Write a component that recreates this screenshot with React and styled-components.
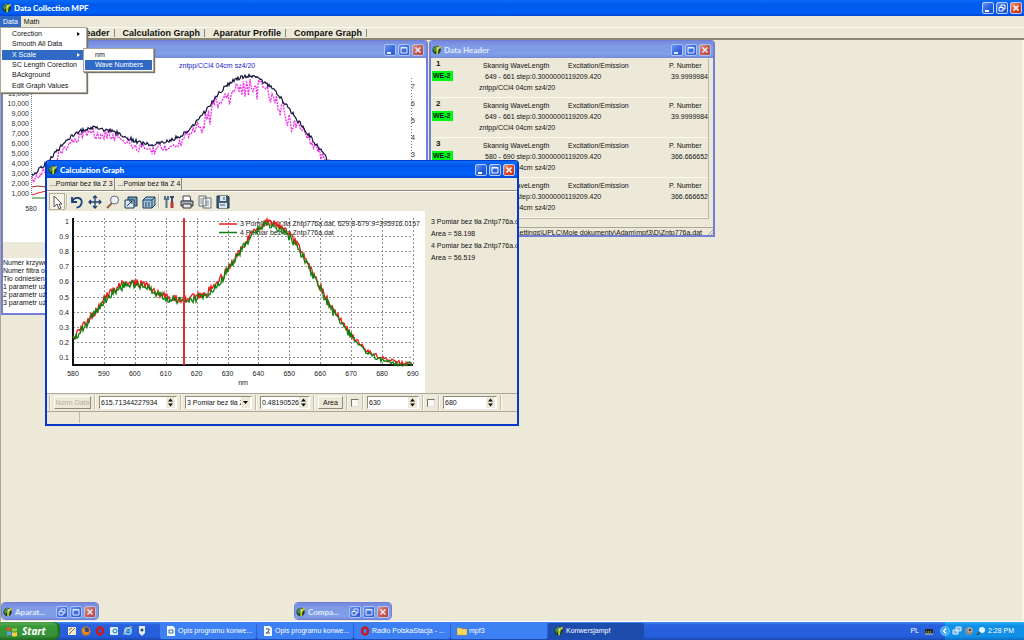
import React from "react";
import styled, { createGlobalStyle, css } from "styled-components";

const GlobalStyle = createGlobalStyle`
  * { box-sizing: border-box; }
  html, body, #root { height: 100%; }
  body {
    margin: 0;
    overflow: hidden;
    background: #ece9d8;
    color: #111;
    font: 7px/10px "Liberation Sans", Arial, sans-serif;
  }
  button, input, select { font: inherit; color: inherit; margin: 0; }
`;

const Screen = styled.div`
  display: flex;
  flex-direction: column;
  height: 100vh;
`;

const TitleBar = styled.header`
  display: flex;
  align-items: center;
  gap: 2px;
  height: ${({ $main }) => ($main ? 16 : 17)}px;
  flex: none;
  padding: 0 2px 0 ${({ $main }) => ($main ? 2 : 1)}px;
  color: #fff;
  background: linear-gradient(#0a6cf8, #0058ea 30%, #0060f8 80%, #0046d0);
  ${({ $inactive }) =>
    $inactive &&
    css`
      color: #dce6fa;
      background: linear-gradient(#7388dc, #809ae6 30%, #7f9ee8 80%, #7488d8);
    `}
`;

const Title = styled.h1`
  flex: 1;
  margin: 0;
  overflow: hidden;
  white-space: nowrap;
  font: 900 8px/12px Lato, "Noto Sans", sans-serif;
`;

const Captions = styled.div`
  display: flex;
  gap: 2px;
  opacity: ${({ $inactive }) => ($inactive ? 0.8 : 1)};
`;

const CaptionButton = styled.button`
  display: flex;
  width: 12px;
  height: 12px;
  padding: 0;
  border: 1px solid #b8ccf8;
  border-radius: 2px;
  background: ${({ $close }) =>
    $close
      ? "linear-gradient(135deg, #f09a80, #dc4a28 50%, #c03418)"
      : "linear-gradient(135deg, #6a96f4, #2c62e0 50%, #1c4cc8)"};
`;

const MenuBar = styled.nav`
  display: flex;
  flex: none;
  height: 11px;
`;

const MenuTitle = styled.button`
  height: 11px;
  padding: 0 3px;
  border: 0;
  color: ${({ $open }) => ($open ? "#fff" : "#111")};
  background: ${({ $open }) => ($open ? "#316ac5" : "transparent")};
`;

const TabRow = styled.nav`
  display: flex;
  flex: none;
  height: 13px;
  padding: 1px 0 1px 49px;
  border-top: 1px solid #fbfaf4;
  border-bottom: 2px solid #8b8877;
`;

const PageTab = styled.button`
  padding: 0 4px 0 8px;
  border: 0;
  border-right: 1px solid #8b8877;
  background: none;
  font-weight: bold;
  font-size: 9px;
  line-height: 9px;
`;

const Desktop = styled.main`
  position: relative;
  flex: 1;
  border-left: 1px solid #aaa693;
  border-right: 2px solid #f6f4ec;
  border-bottom: 1px solid #fff;
  overflow: hidden;
`;

const Window = styled.section`
  position: absolute;
  display: flex;
  flex-direction: column;
  left: ${({ $x }) => $x}px;
  top: ${({ $y }) => $y}px;
  width: ${({ $w }) => $w}px;
  height: ${({ $h }) => $h}px;
  border: 2px solid ${({ $inactive }) => ($inactive ? "#727fd4" : "#0838c8")};
  border-top-width: 1px;
  border-radius: 4px 4px 0 0;
  background: #ece9d8;
  overflow: hidden;
`;

const Minimized = styled(Window)`
  top: auto;
  bottom: 1px;
  height: 18px;
  border-width: 1px;
  border-radius: 4px;
`;

const Menu = styled.ul`
  position: absolute;
  z-index: 2;
  display: flex;
  flex-direction: column;
  left: ${({ $x }) => $x}px;
  top: ${({ $y }) => $y}px;
  width: ${({ $w }) => $w}px;
  height: ${({ $h }) => $h}px;
  margin: 0;
  padding: 1px;
  list-style: none;
  background: #fff;
  border: 1px solid #aca899;
  box-shadow: 1px 1px 1px #77736a;
`;

const MenuItem = styled.li`
  display: flex;
  flex: 1;
  align-items: center;
  justify-content: space-between;
  padding: 0 4px 0 10px;
  color: ${({ $on }) => ($on ? "#fff" : "#111")};
  background: ${({ $on }) => ($on ? "#316ac5" : "#fff")};
`;

const White = styled.div`
  background: #fff;
  svg { display: block; }
`;

const Parameters = styled.div`
  flex: 1;
  margin-top: 16px;
  padding-top: 1px;
  background: #fff;
  line-height: 8px;
  white-space: nowrap;
`;

const Records = styled.div`
  flex: 1;
  margin: 0 4px 8px 0;
  border-right: 1px solid #bdb9a8;
  border-bottom: 1px solid #bdb9a8;
`;

const Record = styled.article`
  display: grid;
  grid-template-columns: 46px 91px 1fr 45px;
  grid-template-rows: 11px 11px 11px;
  height: 40px;
  padding-top: 2px;
  border-bottom: 1px solid #fbfaf2;
  white-space: nowrap;
`;

const RecordNo = styled.b`
  padding-left: 5px;
  font-size: 8px;
  line-height: 8px;
`;

const Tag = styled.b`
  width: 21px;
  height: 10px;
  margin-left: 1px;
  padding-left: 1px;
  background: #00f818;
`;

const Cell = styled.span`
  padding: 1px 0 0 ${({ $indent }) => $indent || 0}px;
  grid-column: ${({ $col }) => $col || "auto"};
  text-align: ${({ $right }) => ($right ? "right" : "left")};
`;

const PathBar = styled.footer`
  display: flex;
  align-items: center;
  justify-content: flex-end;
  gap: 3px;
  height: 11px;
  border-top: 1px solid #aca899;
  white-space: nowrap;
`;

const DataTabs = styled.div`
  display: flex;
  height: 13px;
  border-bottom: 1px solid #8d8a7a;
`;

const DataTab = styled.button`
  padding: 0 1px 0 3px;
  border: 0;
  border-right: 1px solid #8d8a7a;
  background: none;
`;

const Rule = styled.i`
  width: 2px;
  height: 15px;
  border-left: 1px solid #c1bdab;
  border-right: 1px solid #fbfaf4;
`;

const Tools = styled.div`
  display: flex;
  align-items: center;
  height: 20px;
  padding-left: 2px;
  gap: 2px;
  border-top: 1px solid #fff;
  ${Rule} { margin: 0 -1px; }
`;

const Tool = styled.button`
  display: flex;
  align-items: center;
  justify-content: center;
  width: 16px;
  height: 17px;
  padding: 0;
  border: 1px solid ${({ $on }) => ($on ? "#b5b19f" : "transparent")};
  background: ${({ $on }) => ($on ? "#f5f3ea" : "none")};
`;

const GraphArea = styled.div`
  display: flex;
  height: 182px;
`;

const Results = styled.div`
  flex: 1;
  padding: 5px 0 0 6px;
  line-height: 12px;
  white-space: nowrap;
  overflow: hidden;
`;

const Controls = styled.form`
  display: flex;
  align-items: center;
  height: 19px;
  padding-left: 2px;
  gap: 3px;
  border-top: 1px solid #aca899;
  border-bottom: 1px solid #aca899;
`;

const PushButton = styled.button`
  width: ${({ $w }) => $w}px;
  height: 13px;
  padding: 0;
  border: 1px solid;
  border-color: #fff #8d8a7a #8d8a7a #fff;
  background: #ece9d8;
  white-space: nowrap;
  overflow: hidden;
  &:disabled { color: #b5b19f; }
`;

const Field = styled.label`
  display: flex;
  width: ${({ $w }) => $w}px;
  height: 13px;
  padding-right: 1px;
  align-items: center;
  border: 1px solid;
  border-color: #8d8a7a #fff #fff #8d8a7a;
  background: #fff;
  input, select {
    flex: 1;
    min-width: 0;
    width: 0;
    height: 10px;
    padding: 0 0 0 1px;
    border: 0;
    outline: 0;
    appearance: none;
    background: none;
  }
`;

const Spin = styled.span`
  display: flex;
  width: 9px;
  height: 11px;
  background: #ece9d8;
`;

const Check = styled.input`
  appearance: none;
  width: 8px;
  height: 8px;
  background: #f8f7f0;
  border: 1px solid;
  border-color: #77746a #ddd #ddd #77746a;
`;

const StatusBar = styled.footer`
  flex: 1;
  &::before {
    content: "";
    display: block;
    width: 32px;
    height: 11px;
    border-right: 1px solid #bdb9a8;
  }
`;

const TaskBar = styled.footer`
  display: flex;
  flex: none;
  height: 18px;
  color: #fff;
  background: linear-gradient(#3f8cf3, #2a62de 15%, #245edc 80%, #1c48b0);
`;

const Start = styled.button`
  display: flex;
  align-items: center;
  gap: 5px;
  width: 60px;
  padding: 0 0 0 6px;
  border: 0;
  border-radius: 0 6px 6px 0;
  background: linear-gradient(#5cb45a, #389838 25%, #37923a 75%, #246c24);
  box-shadow: inset -2px 0 2px #1c641c;
  color: #fff;
  font: italic bold 10px/14px "Open Sans", sans-serif;
`;

const QuickLaunch = styled.div`
  display: flex;
  align-items: center;
  gap: 4px;
  width: 100px;
  padding-left: 7px;
`;

const Task = styled.button`
  display: flex;
  align-items: center;
  gap: 2px;
  flex: 0 1 96px;
  min-width: 0;
  margin: 1px 1px 1px 0;
  padding: 0 5px 0 6px;
  border: 0;
  border-radius: 2px;
  color: #fff;
  white-space: nowrap;
  overflow: hidden;
  background: ${({ $on }) => ($on ? "#1c4cac" : "#3c80f4")};
  svg { flex: none; }
`;

const Language = styled.div`
  display: flex;
  align-items: center;
  gap: 5px;
  margin-left: auto;
  padding-right: 11px;
`;

const Tray = styled.div`
  display: flex;
  align-items: center;
  gap: 2px;
  width: 79px;
  padding-right: 10px;
  white-space: nowrap;
  background: linear-gradient(#2cb0f4, #1290e8 20%, #1290e8 80%, #0c70c0);
  svg { flex: none; }
  svg:first-child { margin-left: -5px; }
  time { margin-left: auto; }
`;

const AppIcon = ({ size = 10 }) => (
  <svg width={size} height={size} viewBox="0 0 12 12">
    <circle cx="5.5" cy="6" r="5" fill="#163e28" />
    <path d="M5 11V4l2-2 4-1-1 3-2 1-1 6z" fill="#c8c428" />
    <path d="M1 4l3-2 1 4-2 3z" fill="#409848" />
    <path d="M4 2l3 1-1 3" stroke="#d8ead8" fill="none" />
  </svg>
);

const glyphs = {
  min: <path d="M2 8h4" strokeWidth="2" />,
  max: <path d="M2 2.5h6v5.5H2zM2 3h6" />,
  restore: <path d="M4 4V2h4v4H6M2 4.5h4V8H2z" />,
  close: <path d="M2.5 2.5l5 5m0-5l-5 5" strokeWidth="1.5" />,
};

const Buttons = ({ kinds = ["min", "max", "close"], inactive }) => (
  <Captions $inactive={inactive}>
    {kinds.map(kind => (
      <CaptionButton key={kind} $close={kind === "close"} aria-label={kind}>
        <svg width="10" height="10" fill="none" stroke="#fff">
          {glyphs[kind]}
        </svg>
      </CaptionButton>
    ))}
  </Captions>
);

// small repeatable generator so the spectra keep their shape between renders
const random = seed => () => {
  seed = (seed * 16807) % 2147483647;
  return seed / 2147483647 - 0.5;
};

const trace = (points, seed, noise, step = 1, drop = 0) => {
  const rnd = random(seed);
  const out = [];
  for (let i = 0; i < points.length - 1; i++) {
    const [x0, y0] = points[i];
    const [x1, y1] = points[i + 1];
    for (let x = x0; x < x1; x += step) {
      const t = (x - x0) / (x1 - x0);
      const y = y0 + (y1 - y0) * t;
      // the signal gets noisier as it rises
      const spike = drop * (rnd() + 0.5) * (y < 60 ? 2 : 1);
      const jitter = noise * (y > 130 ? 0.5 : 1);
      out.push(`${x},${(y + rnd() * jitter + spike).toFixed(1)}`);
    }
  }
  return out.join(" ");
};

const dataCurve = [
  [29, 117], [37, 111], [46, 102], [56, 91], [66, 80], [78, 73], [90, 70],
  [98, 71], [112, 74], [125, 80], [137, 85], [150, 87], [163, 84], [178, 78],
  [190, 67], [201, 55], [212, 40], [222, 29], [233, 21], [244, 18], [254, 20],
  [266, 27], [277, 39], [287, 52], [300, 69], [312, 85], [328, 106],
];

const calcCurve = [
  [26, 126], [34, 117], [42, 108], [50, 98], [58, 87], [66, 80], [74, 74],
  [84, 71], [94, 73], [104, 77], [114, 83], [126, 87], [138, 88], [150, 86],
  [160, 81], [170, 73], [180, 59], [190, 44], [200, 29], [208, 18], [215, 13],
  [222, 11], [230, 14], [240, 21], [250, 33], [262, 55], [274, 77], [286, 99],
  [297, 115], [306, 125], [319, 139], [334, 147], [350, 151], [366, 154],
];

const DataChart = () => (
  <svg width="424" height="184" fontSize="7" fill="#333">
    <text x="176" y="10" fill="#2222c8">zntpp/CCl4 04cm sz4/20</text>
    <path d="M28.5 16V138" stroke="#777" strokeDasharray="1 1" />
    <path d="M408.5 20V140" stroke="#777" strokeDasharray="1 2" />
    {[11, 10, 9, 8, 7, 6, 5, 4, 3, 2, 1].map((n, i) => (
      <text key={n} x="26" y={38 + i * 10} textAnchor="end">{n},000</text>
    ))}
    {[7, 6, 5, 4, 3].map((n, i) => (
      <text key={n} x="408" y={31 + i * 17}>{n}</text>
    ))}
    <text x="28" y="153" textAnchor="middle">580</text>
    <g fill="none">
      <polyline
        points={trace(dataCurve, 91, 3, 1.5, 10)}
        stroke="#f030e8"
        strokeWidth="1.3"
        strokeDasharray="2 1"
      />
      <polyline points={trace(dataCurve, 17, 4)} stroke="#14143c" strokeWidth="1.2" />
      <path d="M29 129l6-1 8 1" stroke="#982828" />
      <path d="M29 137l6-2 8-2" stroke="#f01818" />
      <path d="M29 140h15" stroke="#188018" />
    </g>
  </svg>
);

const CalcChart = () => {
  const xs = [...Array(12).keys()];
  const ys = [...Array(10).keys()];
  return (
    <svg width="378" height="182" fontSize="7" fill="#222">
      <g stroke="#909090" strokeDasharray="2 2">
        {xs.slice(1).map(i => (
          <path key={i} d={`M${Math.round(26 + i * 30.9) + 0.5} 7V155`} />
        ))}
        {ys.map(i => (
          <path key={i} d={`M26 ${Math.round(10 + i * 15.1) + 0.5}H366`} />
        ))}
      </g>
      {xs.map(i => (
        <text key={i} x={26 + i * 30.9} y="165" textAnchor="middle">{580 + i * 10}</text>
      ))}
      {ys.map(i => (
        <text key={i} x="22" y={13 + i * 15.1} textAnchor="end">{(10 - i) / 10}</text>
      ))}
      <text x="196" y="174" textAnchor="middle">nm</text>
      <path d="M172 13h18" stroke="#e81818" strokeWidth="1.5" />
      <path d="M172 21.5h18" stroke="#108010" strokeWidth="1.5" />
      <text x="193" y="15">3 Pomiar bez tła Zntp776a.dat, 629.8-679.9=395916.0157</text>
      <text x="193" y="24">4 Pomiar bez tła Zntp776a.dat</text>
      <path d="M26 7V154H366" fill="none" stroke="#111" strokeWidth="2" />
      <g fill="none" strokeWidth="1.3">
        <polyline points={trace(calcCurve, 41, 8)} stroke="#f01818" />
        <polyline
          points={trace(calcCurve.map(([x, y]) => [x, Math.min(y + 2, 153)]), 77, 8)}
          stroke="#108010"
        />
        <path d="M137 7V154" stroke="#e03030" strokeWidth="2" />
      </g>
    </svg>
  );
};

const toolIcons = {
  Select: <path d="M4 1v11l3-3 2 5 2-1-2-4h3z" fill="#fff" stroke="#555" />,
  Undo: <path d="M2 2v5h5M2.500 6.500c2-6 11-4 9 2-1 3-3 4-5 4" stroke="#1c4078" strokeWidth="1.8" fill="none" />,
  Move: <path d="M7 1v12M1 7h12M5 3l2-2 2 2M5 11l2 2 2-2M3 5L1 7l2 2M11 5l2 2-2 2" stroke="#1c4078" strokeWidth="1.3" fill="none" />,
  Zoom: (
    <>
      <path d="M6 8l-5 5" stroke="#8c6848" strokeWidth="2" />
      <circle cx="8.5" cy="5" r="4" fill="#eef6f8" stroke="#667" />
    </>
  ),
  Depth: (
    <>
      <path d="M4 2h9v9H4z" fill="#6c96b4" stroke="#143858" />
      <path d="M1 5h9v8H1z" fill="#d8e8ec" stroke="#143858" />
      <path d="M3 11l5-5M5 6h3v3" stroke="#143858" fill="none" />
    </>
  ),
  View3D: (
    <>
      <path d="M1 5l3-3h9v8l-3 3H1z" fill="#a4c4d4" stroke="#143858" />
      <path d="M1 5h9v8M10 5l3-3M4 7v5M7 7v5" stroke="#164468" fill="none" />
    </>
  ),
  Edit: (
    <>
      <path d="M3 1v3h3V1M4.5 4v9" stroke="#58708c" strokeWidth="2" fill="none" />
      <path d="M10 7v6" stroke="#bc3830" strokeWidth="3" />
      <path d="M8 2h4M10 2v5" stroke="#35516d" strokeWidth="2" />
    </>
  ),
  Print: (
    <>
      <path d="M3 1h7l1 5H3z" fill="#fff" stroke="#445" />
      <path d="M1 6h12v5H1z" fill="#a8b4b8" stroke="#334" />
      <path d="M3 9h8v4H3z" fill="#e8e8dc" stroke="#334" />
    </>
  ),
  Copy: (
    <>
      <path d="M1 1h7v10H1zM5 3h8v10H5z" fill="#f4f4ee" stroke="#667078" />
      <path d="M3 3v6M8 6v5M10 5v6" stroke="#8494a8" />
    </>
  ),
  Save: (
    <>
      <path d="M1 1h11l1 1v11H1z" fill="#42627c" stroke="#182e44" />
      <path d="M4 1h6v5H4zM3 8h8v5H3z" fill="#dce4e8" />
      <path d="M8 2v3M4 10h5" stroke="#42627c" />
    </>
  ),
};

const ToolButton = ({ name, on }) => (
  <Tool $on={on} aria-label={name}>
    <svg width="14" height="14">{toolIcons[name]}</svg>
  </Tool>
);

const smallIcons = {
  pen: <><path d="M1 1h8v8H1z" fill="#f0ead0" /><path d="M2 8l6-6M2 4l3-2" stroke="#806838" /></>,
  firefox: <><circle cx="5" cy="5" r="4.5" fill="#e87818" /><circle cx="5.5" cy="4" r="2.5" fill="#284890" /><path d="M1 3l3 1-1 2 4 1" stroke="#f4a028" fill="none" /></>,
  opera: <ellipse cx="5" cy="5" rx="3" ry="3.5" fill="none" stroke="#d01818" strokeWidth="2.5" />,
  mail: <><rect x="1" y="1" width="8" height="8" rx="1" fill="#d8f0f8" /><circle cx="6" cy="5" r="2" fill="none" stroke="#2070b8" /></>,
  ie: <><circle cx="5" cy="5" r="3.2" fill="none" stroke="#80d0fc" strokeWidth="1.7" /><path d="M2 5h6" stroke="#80d0fc" /><path d="M1 9C0 6 6 0 9 1" stroke="#f0d060" fill="none" /></>,
  player: <><path d="M2 0h6v7L5 10 2 7z" fill="#e4ecf0" /><circle cx="5" cy="4" r="1.5" fill="#304868" /></>,
  doc: <><path d="M1 0h6l2 2v8H1z" fill="#f4faff" /><path d="M3 4h4v3H3z" fill="none" stroke="#3870a8" /></>,
  help: <><path d="M1 0h6l2 2v8H1z" fill="#f4faff" /><path d="M3 3h3v2L3 7h4" fill="none" stroke="#456" /></>,
  folder: <path d="M0 2h4l1 1h5v6H0z" fill="#f8d858" stroke="#c89828" strokeWidth=".5" />,
  keyboard: <><path d="M1 3h8v5H1z" fill="#282820" /><path d="M2 6h6" stroke="#d8d4b8" strokeDasharray="1 1" /><path d="M1 8h8" stroke="#d8d4b8" /></>,
  arrow: <><circle cx="5" cy="5" r="4.5" fill="#38a8f4" stroke="#a4d8fc" strokeWidth=".6" /><path d="M6 2.5L3.5 5 6 7.5" stroke="#fff" strokeWidth="1.4" fill="none" /></>,
  network: <><path d="M4 1h5v4H4zM1 4h5v4H1z" fill="#80b0e0" stroke="#dfefff" /></>,
  volume: <><circle cx="5" cy="5" r="4" fill="#8c8c8c" /><circle cx="6" cy="4" r="2" fill="#444" stroke="#ccc" /></>,
  search: <><circle cx="6" cy="4" r="3" fill="#e0f4ff" /><path d="M4 6L1 9" stroke="#443" strokeWidth="1.5" /></>,
};

const Icon = ({ name }) => <svg width="10" height="10">{smallIcons[name]}</svg>;

const Submark = () => (
  <svg width="4" height="6"><path d="M0 1l3 2-3 2z" fill="currentColor" /></svg>
);

const SpinField = ({ width, value, label }) => (
  <Field $w={width}>
    <input aria-label={label} defaultValue={value} />
    <Spin>
      <svg width="9" height="11" fill="#111">
        <path d="M2 4.5l2.5-3 2.5 3zM2 6.500h5l-2.5 3z" />
      </svg>
    </Spin>
  </Field>
);

const records = [
  { no: 1, range: "649 - 661", number: "39.9999984" },
  { no: 2, range: "649 - 661", number: "39.9999984" },
  { no: 3, range: "580 - 690", number: "366.666652" },
  { no: 4, range: "580 - 690", number: "366.666652" },
];

const App = () => (
  <Screen>
    <GlobalStyle />
    <TitleBar $main>
      <AppIcon />
      <Title>Data Collection MPF</Title>
      <Buttons kinds={["min", "restore", "close"]} />
    </TitleBar>
    <MenuBar>
      <MenuTitle $open>Data</MenuTitle>
      <MenuTitle>Math</MenuTitle>
    </MenuBar>
    <TabRow>
      <PageTab>Data Header</PageTab>
      <PageTab>Calculation Graph</PageTab>
      <PageTab>Aparatur Profile</PageTab>
      <PageTab>Compare Graph</PageTab>
    </TabRow>

    <Menu $x={0} $y={27} $w={87} $h={66}>
      <MenuItem>Corection <Submark /></MenuItem>
      <MenuItem>Smooth All Data</MenuItem>
      <MenuItem $on>X Scale <Submark /></MenuItem>
      <MenuItem>SC Length Corection</MenuItem>
      <MenuItem>BAckground</MenuItem>
      <MenuItem>Edit Graph Values</MenuItem>
    </Menu>
    <Menu $x={83} $y={48} $w={71} $h={24}>
      <MenuItem>nm</MenuItem>
      <MenuItem $on>Wave Numbers</MenuItem>
    </Menu>

    <Desktop>
      <Window $x={0} $y={0} $w={427} $h={275} $inactive>
        <TitleBar $inactive>
          <Title />
          <Buttons inactive />
        </TitleBar>
        <White><DataChart /></White>
        <Parameters>
          <div>Numer krzywej</div>
          <div>Numer filtra odn.</div>
          <div>Tło odniesienia</div>
          <div>1 parametr użyt.</div>
          <div>2 parametr użyt.</div>
          <div>3 parametr użyt.</div>
        </Parameters>
      </Window>

      <Window $x={428} $y={0} $w={286} $h={197} $inactive>
        <TitleBar $inactive>
          <AppIcon />
          <Title>Data Header</Title>
          <Buttons inactive />
        </TitleBar>
        <Records>
          {records.map(({ no, range, number }) => (
            <Record key={no}>
              <RecordNo>{no}</RecordNo>
              <Cell $indent={6}>Skannig WaveLength</Cell>
              <Cell>Excitation/Emission</Cell>
              <Cell $indent={6}>P. Number</Cell>
              <Tag>WE-2</Tag>
              <Cell $indent={8} $col="2 / 4">{range} step:0.3000000119209.420</Cell>
              <Cell $right>{number}</Cell>
              <Cell $indent={2} $col="2 / 5">zntpp/CCl4 04cm sz4/20</Cell>
            </Record>
          ))}
        </Records>
        <PathBar>
          C:\Documents and Settings\UPLC\Moje dokumenty\Adam\mpf3\D\Zntp776a.dat
          <svg width="8" height="8" stroke="#aaa693"><path d="M1 8l7-7M4 8l4-4M7 8l1-1" /></svg>
        </PathBar>
      </Window>

      <Window $x={44} $y={120} $w={474} $h={266}>
        <TitleBar>
          <AppIcon />
          <Title>Calculation Graph</Title>
          <Buttons />
        </TitleBar>
        <DataTabs>
          <DataTab>...Pomiar bez tła Z 3</DataTab>
          <DataTab>...Pomiar bez tła Z 4</DataTab>
        </DataTabs>
        <Tools>
          <ToolButton name="Select" on />
          <Rule />
          <ToolButton name="Undo" />
          <ToolButton name="Move" />
          <ToolButton name="Zoom" />
          <ToolButton name="Depth" />
          <ToolButton name="View3D" />
          <Rule />
          <ToolButton name="Edit" />
          <ToolButton name="Print" />
          <ToolButton name="Copy" />
          <ToolButton name="Save" />
        </Tools>
        <GraphArea>
          <White><CalcChart /></White>
          <Results>
            <div>3 Pomiar bez tła Zntp776a.dat</div>
            <div>Area = 58.198</div>
            <div>4 Pomiar bez tła Zntp776a.dat</div>
            <div>Area = 56.519</div>
          </Results>
        </GraphArea>
        <Controls>
          <Rule />
          <PushButton $w={37} type="button" disabled>Norm Data</PushButton>
          <Rule />
          <SpinField width={78} value="615.71344227934" label="Wavelength" />
          <Rule />
          <Field $w={67}>
            <select aria-label="Series">
              <option>3 Pomiar bez tła Z</option>
            </select>
            <Spin><svg width="9" height="11"><path d="M2 4h5L4.500 7z" /></svg></Spin>
          </Field>
          <Rule />
          <SpinField width={50} value="0.481905268" label="Value" />
          <Rule />
          <PushButton $w={25} type="button">Area</PushButton>
          <Rule />
          <Check type="checkbox" aria-label="Lower limit" />
          <Rule />
          <SpinField width={52} value="630" label="From" />
          <Rule />
          <Check type="checkbox" aria-label="Upper limit" />
          <Rule />
          <SpinField width={54} value="680" label="To" />
          <Rule />
        </Controls>
        <StatusBar />
      </Window>

      <Minimized $x={0} $w={98} $inactive>
        <TitleBar $inactive>
          <AppIcon />
          <Title>Aparat...</Title>
          <Buttons kinds={["restore", "max", "close"]} inactive />
        </TitleBar>
      </Minimized>
      <Minimized $x={293} $w={98} $inactive>
        <TitleBar $inactive>
          <AppIcon />
          <Title>Compa...</Title>
          <Buttons kinds={["restore", "max", "close"]} inactive />
        </TitleBar>
      </Minimized>
    </Desktop>

    <TaskBar>
      <Start>
        <svg width="11" height="11">
          <path d="M1 2q2-2 4 0v3q-2-1-4 0z" fill="#f05028" />
          <path d="M6 2q2 1 5 0v3q-3 1-5 0z" fill="#88d040" />
          <path d="M1 6q2-1 4 0v4q-2-2-4 0z" fill="#58a0f8" />
          <path d="M6 6q2 1 5 0v4q-3 1-5 0z" fill="#f8d040" />
        </svg>
        Start
      </Start>
      <QuickLaunch>
        {["pen", "firefox", "opera", "mail", "ie", "player"].map(name => (
          <Icon key={name} name={name} />
        ))}
      </QuickLaunch>
      <Task><Icon name="doc" />Opis programu konwe...</Task>
      <Task><Icon name="help" />Opis programu konwe...</Task>
      <Task><Icon name="opera" />Radio PolskaStacja - ...</Task>
      <Task><Icon name="folder" />mpf3</Task>
      <Task $on><AppIcon />Konwersjampf</Task>
      <Language>PL <Icon name="keyboard" /></Language>
      <Tray>
        <Icon name="arrow" />
        <Icon name="network" />
        <Icon name="volume" />
        <Icon name="search" />
        <time>2:28 PM</time>
      </Tray>
    </TaskBar>
  </Screen>
);

export default App;
